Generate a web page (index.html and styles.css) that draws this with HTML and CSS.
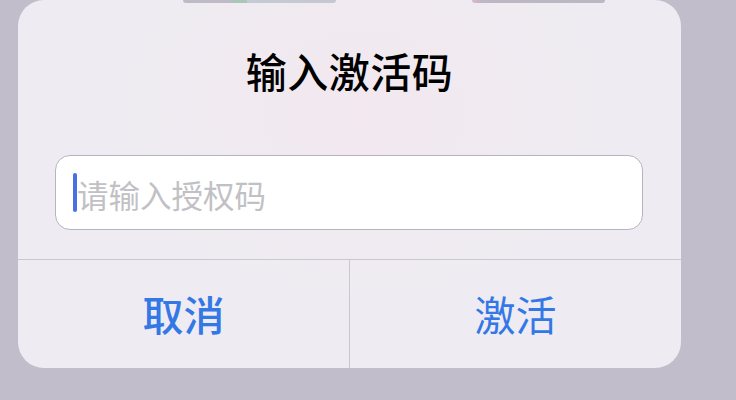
FILE: index.html
```html
<!DOCTYPE html>
<html lang="zh-CN">
<head>
<meta charset="utf-8">
<title>输入激活码</title>
<link rel="stylesheet" href="styles.css">
</head>
<body>
<div class="screen">
  <div class="peek peek-left"></div>
  <div class="peek peek-right"></div>
  <div class="dialog">
    <div class="title">输入激活码</div>
    <div class="field">
      <span class="caret"></span>
      <span class="placeholder">请输入授权码</span>
    </div>
    <div class="actions">
      <div class="btn btn-cancel">取消</div>
      <div class="btn btn-ok">激活</div>
    </div>
  </div>
</div>
</body>
</html>
```
FILE: styles.css
```css
html, body {
  margin: 0;
  padding: 0;
}
body {
  background: #c1bdca;
  font-family: "Noto Sans CJK SC", "Noto Sans", sans-serif;
}
.screen {
  position: relative;
  width: 736px;
  height: 400px;
  overflow: hidden;
  padding-left: 18px;
  box-sizing: border-box;
}
.dialog {
  width: 663px;
  height: 368px;
  border-radius: 26px;
  background:
    radial-gradient(ellipse 260px 200px at 52% 30%, rgba(245, 230, 238, 0.7), rgba(245, 230, 238, 0) 100%),
    #eeecf2;
  display: flex;
  flex-direction: column;
  overflow: hidden;
}
.peek {
  position: absolute;
  top: 0;
  height: 3px;
  border-radius: 0 0 3px 3px;
  z-index: 2;
}
.peek-left {
  left: 183px;
  width: 153px;
  background: linear-gradient(90deg, #bfbbc6 0, #bfbbc6 32%, #a9c6b8 32%, #a9c6b8 42%, #c3cbd3 42%, #c6c7d0 100%);
}
.peek-right {
  left: 472px;
  width: 133px;
  background: linear-gradient(90deg, #d9b9cc 0, #bbb7c3 8%, #bbb7c3 100%);
}
.title {
  margin-top: 46px;
  height: 48px;
  line-height: 48px;
  text-align: center;
  font-size: 41px;
  font-weight: 500;
  color: #000;
  letter-spacing: 0.5px;
}
.field {
  margin: 61px 38px 0 37px;
  height: 73px;
  border: 1px solid #b6b3bc;
  border-radius: 15px;
  background: #fff;
  display: flex;
  align-items: center;
  padding-left: 17px;
}
.caret {
  width: 4px;
  height: 39px;
  border-radius: 2px;
  background: #4b6fe2;
}
.placeholder {
  font-size: 31.5px;
  color: #c1c1c5;
  line-height: 40px;
  margin-top: 2px;
}
.actions {
  margin-top: 29px;
  flex: 1;
  display: flex;
  border-top: 1px solid #cac7cf;
}
.btn {
  flex: 1;
  display: flex;
  align-items: center;
  justify-content: center;
  font-size: 41px;
  color: #3478e6;
  padding-bottom: 2px;
}
.btn-cancel {
  font-weight: 500;
  border-right: 1px solid #cac7cf;
}
.btn-ok {
  font-weight: 400;
}
```
